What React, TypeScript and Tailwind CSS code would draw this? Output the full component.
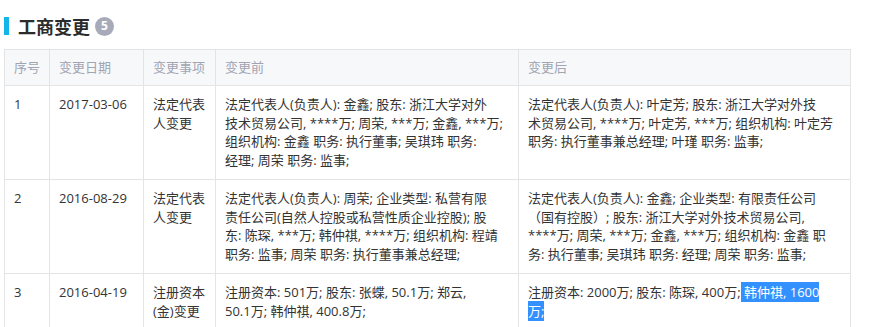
import React from 'react';

// 每行按截图的换行位置拆开
const rows = [
    {
        no: '1',
        date: '2017-03-06',
        item: ['法定代表', '人变更'],
        before: [
            '法定代表人(负责人): 金鑫; 股东: 浙江大学对外',
            '技术贸易公司, ****万; 周荣, ***万; 金鑫, ***万;',
            '组织机构: 金鑫 职务: 执行董事; 吴琪玮 职务:',
            '经理; 周荣 职务: 监事;',
        ],
        after: [
            '法定代表人(负责人): 叶定芳; 股东: 浙江大学对外技',
            '术贸易公司, ****万; 叶定芳, ***万; 组织机构: 叶定芳',
            '职务: 执行董事兼总经理; 叶瑾 职务: 监事;',
        ],
    },
    {
        no: '2',
        date: '2016-08-29',
        item: ['法定代表', '人变更'],
        before: [
            '法定代表人(负责人): 周荣; 企业类型: 私营有限',
            '责任公司(自然人控股或私营性质企业控股); 股',
            '东: 陈琛, ***万; 韩仲祺, ****万; 组织机构: 程靖',
            '职务: 监事; 周荣 职务: 执行董事兼总经理;',
        ],
        after: [
            '法定代表人(负责人): 金鑫; 企业类型: 有限责任公司',
            '（国有控股）; 股东: 浙江大学对外技术贸易公司,',
            '****万; 周荣, ***万; 金鑫, ***万; 组织机构: 金鑫 职',
            '务: 执行董事; 吴琪玮 职务: 经理; 周荣 职务: 监事;',
        ],
    },
    {
        no: '3',
        date: '2016-04-19',
        item: ['注册资本', '(金)变更'],
        before: ['注册资本: 501万; 股东: 张蝶, 50.1万; 郑云,', '50.1万; 韩仲祺, 400.8万;'],
        after: null,
    },
];

const th = 'border border-[#e4e4e4] px-[9px] h-[36px] text-left font-normal text-[#a0a4b3]';
const td = 'border border-[#e4e4e4] px-[9px] pt-[9px] pb-[10px] align-top';

const Lines = ({ lines }: { lines: string[] }) => (
    <>
        {lines.map((l, i) => (
            <div key={i} className="whitespace-nowrap">{l}</div>
        ))}
    </>
);

export default function App() {
    return (
        <div className="bg-white w-[871px] h-[327px] overflow-hidden text-[#333] font-['Open_Sans','Noto_Sans_CJK_SC',sans-serif]">
            {/* 标题 */}
            <div className="flex items-center h-[49px] pl-[4px] pt-[3px]">
                <div className="w-[5px] h-[18px] bg-[#13b5ea]" />
                <h2 className="ml-[9px] text-[18px] font-bold leading-none text-[#2b2b2b] font-['Noto_Sans_CJK_SC',sans-serif]">工商变更</h2>
                <span className="ml-[5px] w-[19px] h-[19px] rounded-full bg-[#a7abb9] text-white text-[12px] font-bold flex items-center justify-center">5</span>
            </div>

            <table className="ml-[4px] w-[847px] border-collapse table-fixed text-[13px] leading-[18.5px]">
                <colgroup>
                    <col className="w-[45px]" />
                    <col className="w-[94px]" />
                    <col className="w-[72px]" />
                    <col className="w-[303px]" />
                    <col />
                </colgroup>
                <thead>
                    <tr className="bg-[#f7f8fa]">
                        <th className={th}>序号</th>
                        <th className={th}>变更日期</th>
                        <th className={th}>变更事项</th>
                        <th className={th}>变更前</th>
                        <th className={th}>变更后</th>
                    </tr>
                </thead>
                <tbody>
                    {rows.map((r) => (
                        <tr key={r.no}>
                            <td className={td}>{r.no}</td>
                            <td className={td}>{r.date}</td>
                            <td className={td}><Lines lines={r.item} /></td>
                            <td className={td}><Lines lines={r.before} /></td>
                            <td className={td}>
                                {r.after ? (
                                    <Lines lines={r.after} />
                                ) : (
                                    <>
                                        <div className="whitespace-nowrap">
                                            注册资本: 2000万; 股东: 陈琛, 400万;<span className="bg-[#3390ff] text-white py-[1px]"> 韩仲祺, 1600</span>
                                        </div>
                                        <div>
                                            <span className="bg-[#3390ff] text-white py-[1px]">万;</span>
                                        </div>
                                    </>
                                )}
                            </td>
                        </tr>
                    ))}
                </tbody>
            </table>
        </div>
    );
}
